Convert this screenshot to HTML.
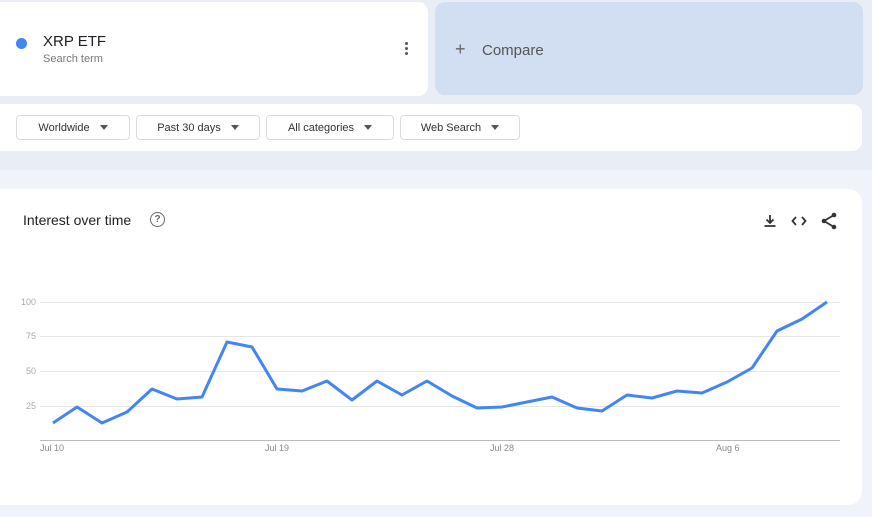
<!DOCTYPE html>
<html><head><style>
body{margin:0;width:872px;height:517px;background:#e9edf6;font-family:"Liberation Sans",sans-serif;position:relative;overflow:hidden}
.c{position:absolute;background:#fff;border-radius:10px}
.f{position:absolute;top:115px;height:25px;border:1px solid #dadce0;border-radius:4px;font-size:11px;color:#333;line-height:24px;box-sizing:border-box;text-align:center}
.f span{display:inline-block;margin-left:10px;border-left:4px solid transparent;border-right:4px solid transparent;border-top:5px solid #555;vertical-align:1px}
.yl{position:absolute;font-size:9px;color:#aaa;text-align:right;width:20px;left:16px}
.xl{position:absolute;font-size:9px;color:#888;top:443px}
</style></head><body>
<div style="position:absolute;left:0;top:170px;width:872px;height:347px;background:#f0f3f9"></div>
<div class="c" style="left:0;top:2px;width:428px;height:94px;border-radius:0 10px 10px 0"></div>
<div style="position:absolute;left:16px;top:38px;width:11px;height:11px;border-radius:50%;background:#4285f4"></div>
<div style="position:absolute;left:43px;top:33px;font-size:15px;color:#202124">XRP ETF</div>
<div style="position:absolute;left:43px;top:53px;font-size:11px;color:#777">Search term</div>
<div style="position:absolute;left:405px;top:42px;width:3px">
<div style="width:3px;height:3px;background:#555;border-radius:50%;margin-bottom:2px"></div><div style="width:3px;height:3px;background:#555;border-radius:50%;margin-bottom:2px"></div><div style="width:3px;height:3px;background:#555;border-radius:50%"></div></div>
<div class="c" style="left:435px;top:2px;width:428px;height:93px;background:#d2dff2"></div>
<div style="position:absolute;left:455px;top:39px;font-size:18px;color:#666">+</div>
<div style="position:absolute;left:482px;top:42px;font-size:15px;color:#555">Compare</div>
<div class="c" style="left:0;top:104px;width:862px;height:47px;border-radius:0 10px 10px 0"></div>
<div class="f" style="left:16px;width:114px">Worldwide<span></span></div>
<div class="f" style="left:136px;width:124px">Past 30 days<span></span></div>
<div class="f" style="left:266px;width:128px">All categories<span></span></div>
<div class="f" style="left:400px;width:120px">Web Search<span></span></div>
<div class="c" style="left:0;top:189px;width:862px;height:316px;border-radius:0 14px 14px 0"></div>
<div style="position:absolute;left:23px;top:212px;font-size:14px;color:#202124">Interest over time</div>
<div style="position:absolute;left:150px;top:212px;width:13px;height:13px;border:1.5px solid #666;border-radius:50%;font-size:10px;line-height:13px;text-align:center;color:#666;font-weight:bold">?</div>
<svg style="position:absolute;left:760px;top:210px" width="80" height="22">
<g stroke="#333" stroke-width="1.8" fill="none"><path d="M10 5v8M6.5 9.5l3.5 3.5 3.5-3.5M4.5 16h11"/><path d="M36 7l-3.5 4 3.5 4M42 7l3.5 4-3.5 4"/><path d="M74 5L64 11L74 17"/></g>
<g fill="#333"><circle cx="74" cy="5" r="2.3"/><circle cx="64" cy="11" r="2.3"/><circle cx="74" cy="17" r="2.3"/></g></svg>
<svg style="position:absolute;left:0;top:0" width="872" height="517">
<g stroke="#e6e6e6" stroke-width="1"><line x1="40" x2="840" y1="302.5" y2="302.5"/><line x1="40" x2="840" y1="336.5" y2="336.5"/><line x1="40" x2="840" y1="371.5" y2="371.5"/><line x1="40" x2="840" y1="406.5" y2="406.5"/></g>
<line x1="40" x2="840" y1="440.5" y2="440.5" stroke="#bbb"/>
<polyline fill="none" stroke="#4285f4" stroke-width="3" stroke-linejoin="round" points="53,423 77,407 102,423 127,412 152,389 177,399 202,397 227,342 252,347 277,389 302,391 327,381 352,400 377,381 402,395 427,381 452,396 477,408 502,407 527,402 552,397 577,408 602,411 627,395 652,398 677,391 702,393 727,382 752,368 777,331 802,319 827,302"/>
</svg>
<div class="yl" style="top:297px">100</div><div class="yl" style="top:331px">75</div><div class="yl" style="top:366px">50</div><div class="yl" style="top:401px">25</div>
<div class="xl" style="left:40px">Jul 10</div><div class="xl" style="left:265px">Jul 19</div><div class="xl" style="left:490px">Jul 28</div><div class="xl" style="left:716px">Aug 6</div>
</body></html>
